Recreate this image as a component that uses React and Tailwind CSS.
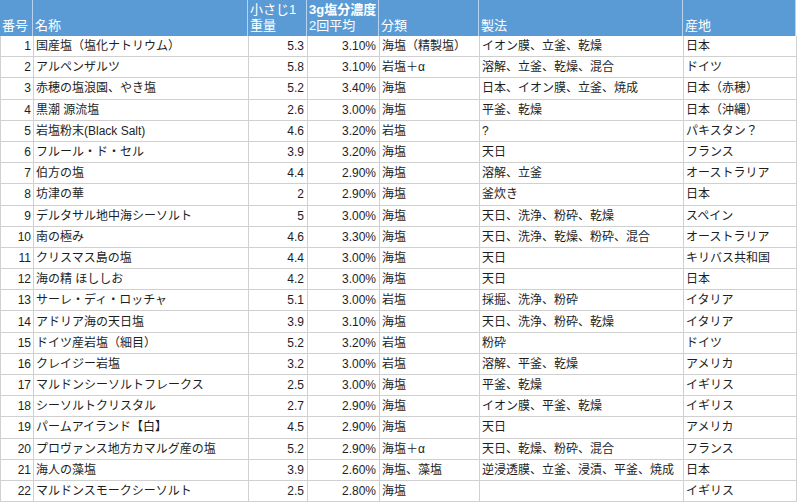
const rows = [
  [1, '国産塩（塩化ナトリウム）', '5.3', '3.10%', '海塩（精製塩）', 'イオン膜、立釜、乾燥', '日本'],
  [2, 'アルペンザルツ', '5.8', '3.10%', '岩塩＋α', '溶解、立釜、乾燥、混合', 'ドイツ'],
  [3, '赤穂の塩浪園、やき塩', '5.2', '3.40%', '海塩', '日本、イオン膜、立釜、焼成', '日本（赤穂）'],
  [4, '黒潮 源流塩', '2.6', '3.00%', '海塩', '平釜、乾燥', '日本（沖縄）'],
  [5, '岩塩粉末(Black Salt)', '4.6', '3.20%', '岩塩', '?', 'パキスタン？'],
  [6, 'フルール・ド・セル', '3.9', '3.20%', '海塩', '天日', 'フランス'],
  [7, '伯方の塩', '4.4', '2.90%', '海塩', '溶解、立釜', 'オーストラリア'],
  [8, '坊津の華', '2', '2.90%', '海塩', '釜炊き', '日本'],
  [9, 'デルタサル地中海シーソルト', '5', '3.00%', '海塩', '天日、洗浄、粉砕、乾燥', 'スペイン'],
  [10, '南の極み', '4.6', '3.30%', '海塩', '天日、洗浄、乾燥、粉砕、混合', 'オーストラリア'],
  [11, 'クリスマス島の塩', '4.4', '3.00%', '海塩', '天日', 'キリバス共和国'],
  [12, '海の精 ほししお', '4.2', '3.00%', '海塩', '天日', '日本'],
  [13, 'サーレ・ディ・ロッチャ', '5.1', '3.00%', '岩塩', '採掘、洗浄、粉砕', 'イタリア'],
  [14, 'アドリア海の天日塩', '3.9', '3.10%', '海塩', '天日、洗浄、粉砕、乾燥', 'イタリア'],
  [15, 'ドイツ産岩塩（細目）', '5.2', '3.20%', '岩塩', '粉砕', 'ドイツ'],
  [16, 'クレイジー岩塩', '3.2', '3.00%', '岩塩', '溶解、平釜、乾燥', 'アメリカ'],
  [17, 'マルドンシーソルトフレークス', '2.5', '3.00%', '海塩', '平釜、乾燥', 'イギリス'],
  [18, 'シーソルトクリスタル', '2.7', '2.90%', '海塩', 'イオン膜、平釜、乾燥', 'イギリス'],
  [19, 'パームアイランド【白】', '4.5', '2.90%', '海塩', '天日', 'アメリカ'],
  [20, 'プロヴァンス地方カマルグ産の塩', '5.2', '2.90%', '海塩＋α', '天日、乾燥、粉砕、混合', 'フランス'],
  [21, '海人の藻塩', '3.9', '2.60%', '海塩、藻塩', '逆浸透膜、立釜、浸漬、平釜、焼成', '日本'],
  [22, 'マルドンスモークシーソルト', '2.5', '2.80%', '海塩', '', 'イギリス'],
]

const cols = 'grid grid-cols-[33px_215px_59px_72px_100px_204px_113px]'
const cell = 'flex items-center border-r border-b border-[#d0d0d0] px-[2px] leading-none whitespace-nowrap overflow-hidden'
const right = `${cell} justify-end pr-[3px]`
const head = 'flex flex-col justify-end border-r border-[#b8d3ee] px-[2px] pb-[2px] leading-[16px] whitespace-nowrap'

export default function App() {
  return (
    <div className="h-[503px] w-[800px] overflow-hidden bg-white font-['Liberation_Sans','Noto_Sans_CJK_JP',sans-serif] text-[12px] text-[#1e1e1e]">
      <div className="w-[796px]">
        <div className={`${cols} h-[36px] bg-[#5b9bd5] text-white text-[13px]`}>
          <div className={head}>番号</div>
          <div className={head}>名称</div>
          <div className={head}>
            <span>小さじ1</span>
            <span>重量</span>
          </div>
          <div className={`${head} px-[1px]`}>
            <span className="font-bold">3g塩分濃度</span>
            <span>2回平均</span>
          </div>
          <div className={head}>分類</div>
          <div className={head}>製法</div>
          <div className={head}>産地</div>
        </div>
        {rows.map((r) => (
          <div key={r[0]} className={`${cols} h-[21.2px] border-l border-[#d0d0d0]`}>
            <div className={`${cell} justify-end pr-[2px]`}>{r[0]}</div>
            <div className={cell}>{r[1]}</div>
            <div className={right}>{r[2]}</div>
            <div className={right}>{r[3]}</div>
            <div className={cell}>{r[4]}</div>
            <div className={cell}>{r[5]}</div>
            <div className={cell}>{r[6]}</div>
          </div>
        ))}
      </div>
    </div>
  )
}
